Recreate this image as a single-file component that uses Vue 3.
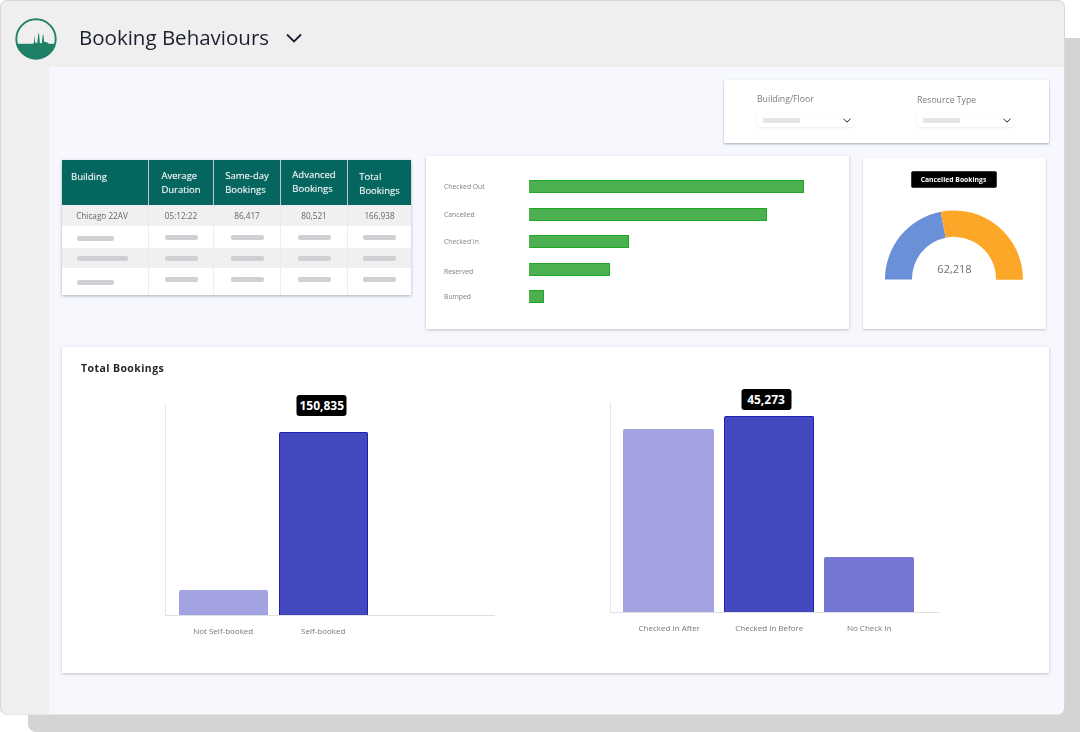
<script setup>
const headers = [
  { lines: ['Building'], cls: 'h-building' },
  { lines: ['Average', 'Duration'], cls: '' },
  { lines: ['Same-day', 'Bookings'], cls: '' },
  { lines: ['Advanced', 'Bookings'], cls: 'h-up' },
  { lines: ['Total', 'Bookings'], cls: 'h-down' }
]
const dataRow = ['Chicago 22AV', '05:12:22', '86,417', '80,521', '166,938']
const blankRows = [
  { cls: 'r-white r-a', first: 37 },
  { cls: 'r-grey r-b', first: 51 },
  { cls: 'r-white r-c', first: 37 }
]
const statuses = [
  { label: 'Checked Out', width: 275, cls: '' },
  { label: 'Cancelled', width: 238, cls: '' },
  { label: 'Checked In', width: 100, cls: '' },
  { label: 'Reserved', width: 81, cls: 'status-low' },
  { label: 'Bumped', width: 15, cls: '' }
]
const selfBooked = [
  { label: 'Not Self-booked', height: 25, color: 'light' },
  { label: 'Self-booked', height: 183, color: 'strong', tip: '150,835' }
]
const checkIns = [
  { label: 'Checked In After', height: 183, color: 'light', width: 91 },
  { label: 'Checked In Before', height: 196, color: 'strong', tip: '45,273', width: 90 },
  { label: 'No Check In', height: 55, color: 'mid', width: 90 }
]
</script>

<template>
  <div class="stage">
    <div class="backdrop"></div>
    <div class="window">
      <header class="topbar">
        <svg class="logo" viewBox="0 0 44 44" width="44" height="44">
          <defs>
            <clipPath id="logoClip"><circle cx="22" cy="22" r="20" /></clipPath>
          </defs>
          <rect x="0" y="26.8" width="44" height="17.2" fill="#1f8068" clip-path="url(#logoClip)" />
          <path d="M18 27C19.8 27 20.2 26 20.4 21L20.8 18.5L21.2 25.5L23.2 26.3L24.2 18L24.7 15.5L25.2 18L25.9 26.3L27.8 26.3L28.6 19L29.1 17L29.6 19L30.1 24.8L33 25.3L35 27Z" fill="#1f8068" />
          <circle cx="22" cy="22" r="19.7" fill="none" stroke="#1f8068" stroke-width="1.9" />
        </svg>
        <h1 class="title">Booking Behaviours</h1>
        <svg class="title-chevron" viewBox="0 0 16 10" width="16" height="10">
          <path d="M1 1.5L8 8.5L15 1.5" fill="none" stroke="#1c2030" stroke-width="1.8" />
        </svg>
      </header>

      <div class="body">
        <aside class="sidebar"></aside>
        <main class="main">
          <section class="filter-row">
            <div class="card filters">
              <div class="field field-first">
                <div class="field-label">Building/Floor</div>
                <div class="select">
                  <span class="select-value"></span>
                  <svg viewBox="0 0 8 5" width="8" height="5"><path d="M.5 .8L4 4.2L7.5 .8" fill="none" stroke="#222" stroke-width="1" /></svg>
                </div>
              </div>
              <div class="field">
                <div class="field-label">Resource Type</div>
                <div class="select">
                  <span class="select-value"></span>
                  <svg viewBox="0 0 8 5" width="8" height="5"><path d="M.5 .8L4 4.2L7.5 .8" fill="none" stroke="#222" stroke-width="1" /></svg>
                </div>
              </div>
            </div>
          </section>

          <section class="middle-row">
            <div class="table-card">
              <div class="t-row t-head">
                <div v-for="h in headers" :key="h.lines.join()" class="t-cell" :class="h.cls">
                  <div class="soft"><div v-for="l in h.lines" :key="l">{{ l }}</div></div>
                </div>
              </div>
              <div class="t-row r-grey r-data">
                <div v-for="v in dataRow" :key="v" class="t-cell"><span class="soft">{{ v }}</span></div>
              </div>
              <div v-for="r in blankRows" :key="r.cls" class="t-row" :class="r.cls">
                <div class="t-cell t-first"><span class="pill" :style="{ width: r.first + 'px' }"></span></div>
                <div v-for="n in 4" :key="n" class="t-cell"><span class="pill pill-up"></span></div>
              </div>
            </div>

            <div class="card status-card">
              <div v-for="s in statuses" :key="s.label" class="status-row">
                <span class="status-label soft" :class="s.cls">{{ s.label }}</span>
                <span class="status-bar" :style="{ width: s.width + 'px' }"></span>
              </div>
            </div>

            <div class="card gauge-card">
              <div class="gauge-tag"><span class="soft">Cancelled Bookings</span></div>
              <div class="gauge">
                <svg viewBox="0 0 140 72" width="140" height="72">
                  <path d="M1 70.5A69 69 0 0 1 56.7 2.7L61.7 28.7A42 42 0 0 0 28 70.5Z" fill="#6a90d8" />
                  <path d="M56.7 2.7A69 69 0 0 1 139 70.8H112A42 42 0 0 0 61.7 28.7Z" fill="#fca728" />
                </svg>
                <span class="gauge-value soft">62,218</span>
              </div>
            </div>
          </section>

          <section class="card totals">
            <h2 class="totals-title soft">Total Bookings</h2>
            <div class="charts">
              <div class="chart chart-left">
                <div class="plot">
                  <div v-for="b in selfBooked" :key="b.label" class="bar" :class="b.color" :style="{ height: b.height + 'px' }">
                    <span v-if="b.tip" class="tip">{{ b.tip }}</span>
                  </div>
                </div>
                <div class="x-labels">
                  <span v-for="b in selfBooked" :key="b.label" class="soft">{{ b.label }}</span>
                </div>
              </div>
              <div class="chart chart-right">
                <div class="plot">
                  <div v-for="b in checkIns" :key="b.label" class="bar" :class="b.color" :style="{ height: b.height + 'px', width: b.width + 'px' }">
                    <span v-if="b.tip" class="tip">{{ b.tip }}</span>
                  </div>
                </div>
                <div class="x-labels">
                  <span v-for="b in checkIns" :key="b.label" class="soft">{{ b.label }}</span>
                </div>
              </div>
            </div>
          </section>
        </main>
      </div>
    </div>
  </div>
</template>

<style>
html, body { margin: 0; background: #fff; }
</style>

<style scoped>
* { box-sizing: border-box; }
.soft { will-change: opacity; }
.stage {
  position: relative;
  width: 1080px;
  height: 732px;
  overflow: hidden;
  font-family: "Open Sans", "Noto Sans", sans-serif;
  background: #fff;
}
.backdrop {
  position: absolute;
  left: 28px;
  top: 38px;
  width: 1060px;
  height: 694px;
  border-radius: 8px;
  background: #d4d4d4;
}
.window {
  position: relative;
  width: 1065px;
  height: 715px;
  display: flex;
  flex-direction: column;
  background: #efefef;
  border: 1px solid #d8d8d8;
  border-bottom-color: #e6e6e6;
  border-radius: 7px;
  overflow: hidden;
}
.topbar {
  height: 66px;
  flex: none;
  display: flex;
  align-items: center;
  padding-left: 13px;
}
.logo { flex: none; margin-top: 9px; }
.title {
  margin: 0 0 0 21px;
  font-size: 20.5px;
  font-weight: 400;
  color: #1c2030;
  line-height: 1;
  padding-top: 6px;
  will-change: opacity;
}
.title-chevron { margin: 7px 0 0 17px; flex: none; }
.body { flex: 1; display: flex; min-height: 0; }
.sidebar { width: 48px; flex: none; }
.main {
  flex: 1;
  background: #f7f8fe;
  padding: 13px 15px 0 13px;
}
.card {
  background: #fff;
  box-shadow: 0 1px 3px rgba(110, 115, 135, .4);
}
.filter-row { display: flex; justify-content: flex-end; }
.filters {
  width: 325px;
  height: 63px;
  padding: 14px 0 0 33px;
  display: flex;
  gap: 64px;
  box-shadow: 0 1px 2px rgba(110, 115, 135, .6);
}
.field { width: 96px; }
.field-first { margin-top: -1px; }
.field-label {
  font-size: 8.7px;
  line-height: 12px;
  color: #7c7c7c;
  will-change: opacity;
}
.select {
  margin-top: 7px;
  height: 14px;
  padding: 0 2px 0 6px;
  display: flex;
  align-items: center;
  justify-content: space-between;
  background: #fff;
  box-shadow: 0 1px 2px rgba(120, 120, 130, .14);
}
.field-first .select { margin-top: 8px; }
.select-value { width: 37px; height: 5px; background: #e5e5e5; }
.middle-row {
  margin-top: 13px;
  display: flex;
  align-items: flex-start;
}
.table-card {
  width: 349px;
  margin-top: 4px;
  background: #fff;
  box-shadow: 0 1px 3px rgba(110, 115, 135, .55);
  font-size: 8.2px;
  color: #666;
}
.t-row {
  display: grid;
  grid-template-columns: 87px 65px 67px 67px 63px;
}
.t-cell {
  display: flex;
  align-items: center;
  justify-content: center;
  border-right: 1px solid #ececec;
}
.t-cell:last-child { border-right: none; }
.t-first { justify-content: flex-start; padding-left: 15px; }
.t-head {
  height: 45px;
  background: #05655f;
  color: #f2f5f4;
  font-size: 9.5px;
  line-height: 14px;
  text-shadow: 0 0 1px rgba(255, 255, 255, .55);
}
.t-head .t-cell { border-right: 1px solid #b9c9c7; }
.t-head .t-cell:last-child { border-right: none; }
.t-head .h-building { justify-content: flex-start; padding: 0 0 11px 9px; }
.t-head .h-up { padding-bottom: 2px; }
.t-head .h-down { padding-top: 3px; }
.r-grey { background: #f0f0f0; }
.r-white { background: #fff; }
.r-data { height: 21px; }
.r-data .t-cell:first-child { padding-right: 6px; }
.r-a { height: 22px; }
.r-b { height: 20px; }
.r-c { height: 27px; }
.pill {
  display: block;
  width: 33px;
  height: 5px;
  border-radius: 2px;
  background: #cfd0d3;
}
.t-first .pill { margin-top: 2px; }
.r-b .t-first .pill { margin-top: 1px; }
.r-c .t-first .pill { margin-top: 1px; }
.pill-up { margin-top: 0; }
.r-c .pill-up { margin-bottom: 5px; }
.status-card {
  width: 423px;
  height: 173px;
  margin-left: 15px;
  padding: 24px 0 0 18px;
  display: flex;
  flex-direction: column;
  gap: 14.5px;
}
.status-row {
  height: 13px;
  display: flex;
  align-items: center;
}
.status-label {
  width: 85px;
  flex: none;
  font-size: 6.8px;
  color: #808080;
}
.status-low { margin-top: 4px; }
.status-bar {
  display: block;
  height: 13px;
  background: #4caf50;
  border: 1px solid #1ea826;
  border-left-color: #4caf50;
}
.gauge-card {
  width: 183px;
  height: 171px;
  margin: 2px 0 0 14px;
  padding: 13px 2px 0 0;
  box-shadow: 0 1px 2px rgba(110, 115, 135, .4);
  display: flex;
  flex-direction: column;
  align-items: center;
}
.gauge-tag {
  width: 86px;
  height: 17px;
  display: flex;
  align-items: center;
  justify-content: center;
  background: #000;
  border: 1px solid #3a3a3a;
  border-radius: 2px;
  color: #fff;
  font-size: 6.8px;
  font-weight: 700;
  white-space: nowrap;
}
.gauge {
  position: relative;
  margin-top: 21px;
  width: 140px;
  height: 72px;
}
.gauge svg { display: block; }
.gauge-value {
  position: absolute;
  left: 2px;
  right: 0;
  bottom: 5px;
  text-align: center;
  font-size: 11px;
  line-height: 14px;
  color: #707070;
}
.totals {
  margin-top: 18px;
  height: 326px;
  padding: 14px 0 0 19px;
}
.totals-title {
  margin: 0;
  font-size: 10.5px;
  line-height: 14px;
  font-weight: 700;
  letter-spacing: .04em;
  color: #1f2328;
}
.charts {
  display: flex;
  align-items: flex-start;
  margin-top: 27px;
}
.chart { width: 330px; flex: none; }
.chart-left { margin: 3px 0 0 84px; }
.chart-right { margin-left: 115px; }
.plot {
  height: 211px;
  display: flex;
  align-items: flex-end;
  gap: 10.5px;
  padding-left: 12.5px;
  border-left: 1px solid #e6e6e9;
  border-bottom: 1px solid #e0e0e4;
}
.chart-right .plot { padding-left: 11.5px; gap: 10px; }
.bar {
  position: relative;
  width: 89.5px;
  flex: none;
  border-radius: 2px 2px 0 0;
}
.light { background: #a3a3e2; }
.mid { background: #7476d2; }
.strong {
  background: #4549c0;
  border: 1px solid #1c22b4;
  border-bottom: none;
}
.tip {
  position: absolute;
  left: 50%;
  top: -38px;
  transform: translateX(-53%);
  width: 50px;
  height: 21px;
  display: flex;
  align-items: center;
  justify-content: center;
  background: #000;
  border-radius: 3px;
  color: #fff;
  font-size: 12px;
  font-weight: 700;
}
.chart-right .tip { top: -28px; transform: translateX(-55%); }
.x-labels {
  display: flex;
  gap: 10.5px;
  padding: 9px 0 0 13.5px;
  font-size: 8px;
  line-height: 11px;
  color: #777;
}
.chart-right .x-labels { padding-left: 14.5px; }
.x-labels span {
  width: 89.5px;
  flex: none;
  text-align: center;
  white-space: nowrap;
}
</style>
